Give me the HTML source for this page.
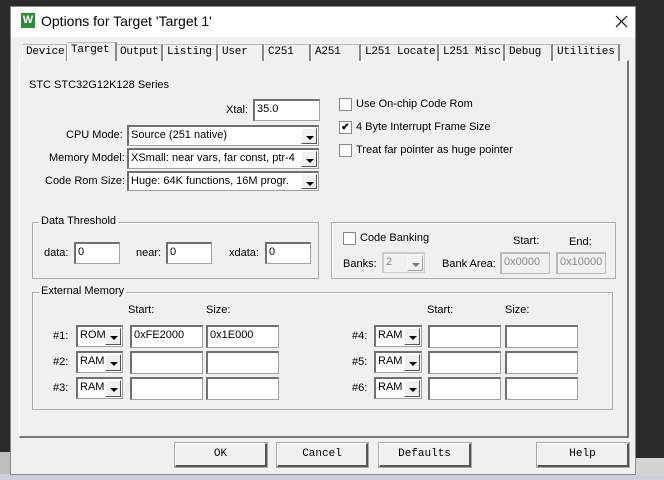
<!DOCTYPE html>
<html><head><meta charset="utf-8"><style>
*{box-sizing:border-box;margin:0;padding:0}
body{width:664px;height:480px;background:#2b2b2b;position:relative;overflow:hidden;font-family:"Liberation Sans",Arial,sans-serif;font-size:11px;color:#000}
.a{position:absolute;white-space:nowrap}
.dlg{position:absolute;left:10px;top:6px;width:626px;height:469px;background:#f0f0f0;border:1px solid #888}
.title{position:absolute;left:0;top:0;width:624px;height:30px;background:#fff}
.tab{position:absolute;top:44px;height:17px;border-top:1px solid #bbb;font-family:"Liberation Mono",monospace;font-size:11px;letter-spacing:-0.2px;line-height:15px;padding-left:3px;background:#f0f0f0;border-left:1px solid #fff;border-right:2px solid #888;white-space:nowrap;overflow:hidden}
.panel{position:absolute;left:19px;top:60px;width:610px;height:378px;border:1px solid #fff;border-right:2px solid #777;border-bottom:2px solid #777}
.box{position:absolute;background:#fff;border:1px solid #a0a0a0;border-top:2px solid #707070;border-left:2px solid #707070;padding-left:2px;line-height:16px;white-space:nowrap;overflow:hidden}
.combo{position:absolute;background:#fff;border:1px solid #a0a0a0;border-top:2px solid #707070;border-left:2px solid #707070;padding-left:2px;line-height:16px;white-space:nowrap;overflow:hidden}
.combo i{position:absolute;right:1px;top:1px;width:16px;bottom:1px;background:#f0f0f0;border:1px solid #fff;border-right:1px solid #555;border-bottom:1px solid #555}
.combo i:after{content:"";position:absolute;left:4px;top:7px;border-left:4px solid transparent;border-right:4px solid transparent;border-top:4px solid #000}
.grp{position:absolute;border:1px solid #aaa;box-shadow:inset 1px 1px 0 #fff}
.leg{position:absolute;background:#f0f0f0;padding:0 2px;top:-8px;left:6px}
.cb{position:absolute;width:13px;height:13px;background:#fff;border:1px solid #888}
.btn{position:absolute;top:443px;height:24px;border:1px solid #fff;border-right:2px solid #555;border-bottom:2px solid #555;outline:1px solid #aaa;font-family:"Liberation Mono",monospace;font-size:11px;text-align:center;line-height:20px;background:#f0f0f0}
.dis{color:#888;background:#f0f0f0}
</style></head><body>
<div class="a" style="left:0;top:452px;width:10px;height:28px;background:#bdbdbd"></div>
<div class="a" style="left:0;top:474px;width:664px;height:6px;background:#c8d0dc"></div>
<div class="a" style="left:636px;top:458px;width:28px;height:18px;background:#d4d4d4"></div>
<div class="dlg">
<div class="title">
<div class="a" style="left:10px;top:6px;width:14px;height:15px;background:#2e8b3a;color:#fff;font-size:11px;font-weight:bold;text-align:center;line-height:15px">W</div>
<div class="a" style="left:30px;top:6px;font-size:14px">Options for Target 'Target 1'</div>
<svg class="a" style="left:604px;top:8px" width="13" height="13"><path d="M1 1L12 12M12 1L1 12" stroke="#000" stroke-width="1.2"/></svg>
</div>
</div>
<div class="panel"></div>
<div class="tab" style="left:22px;width:46px">Device</div>
<div class="tab" style="left:67px;width:50px;top:42px;height:19px;z-index:2">Target</div>
<div class="tab" style="left:116px;width:47px">Output</div>
<div class="tab" style="left:163px;width:55px">Listing</div>
<div class="tab" style="left:218px;width:46px">User</div>
<div class="tab" style="left:264px;width:47px">C251</div>
<div class="tab" style="left:311px;width:50px">A251</div>
<div class="tab" style="left:361px;width:78px">L251 Locate</div>
<div class="tab" style="left:439px;width:66px">L251 Misc</div>
<div class="tab" style="left:505px;width:48px">Debug</div>
<div class="tab" style="left:553px;width:67px">Utilities</div>

<div class="a" style="left:29px;top:79px">STC STC32G12K128 Series</div>
<div class="a" style="left:226px;top:104px">Xtal:</div>
<div class="box" style="left:253px;top:99px;width:67px;height:22px">35.0</div>
<div class="a" style="left:66px;top:129px">CPU Mode:</div>
<div class="combo" style="left:127px;top:125px;width:192px;height:21px">Source (251 native)<i></i></div>
<div class="a" style="left:49px;top:152px">Memory Model:</div>
<div class="combo" style="left:127px;top:148px;width:192px;height:21px">XSmall: near vars, far const, ptr-4<i></i></div>
<div class="a" style="left:45px;top:175px">Code Rom Size:</div>
<div class="combo" style="left:127px;top:171px;width:192px;height:20px">Huge: 64K functions, 16M progr.<i></i></div>

<div class="cb" style="left:339px;top:98px"></div><div class="a" style="left:356px;top:98px">Use On-chip Code Rom</div>
<div class="cb" style="left:339px;top:121px;font-size:10px;line-height:11px;text-align:center;font-weight:bold">✔</div><div class="a" style="left:356px;top:121px">4 Byte Interrupt Frame Size</div>
<div class="cb" style="left:339px;top:144px"></div><div class="a" style="left:356px;top:144px">Treat far pointer as huge pointer</div>

<div class="grp" style="left:32px;top:222px;width:287px;height:57px"><div class="leg">Data Threshold</div></div>
<div class="a" style="left:44px;top:247px">data:</div><div class="box" style="left:74px;top:242px;width:46px;height:22px">0</div>
<div class="a" style="left:136px;top:247px">near:</div><div class="box" style="left:166px;top:242px;width:46px;height:22px">0</div>
<div class="a" style="left:229px;top:247px">xdata:</div><div class="box" style="left:265px;top:242px;width:46px;height:22px">0</div>

<div class="grp" style="left:331px;top:222px;width:285px;height:57px"></div>
<div class="cb" style="left:343px;top:232px"></div><div class="a" style="left:360px;top:232px">Code Banking</div>
<div class="a" style="left:513px;top:235px">Start:</div><div class="a" style="left:569px;top:236px">End:</div>
<div class="a" style="left:343px;top:258px">Banks:</div>
<div class="combo dis" style="left:382px;top:252px;width:43px;height:21px;border-color:#ccc">2<i style="opacity:.5"></i></div>
<div class="a" style="left:442px;top:258px">Bank Area:</div>
<div class="box dis" style="left:500px;top:252px;width:50px;height:22px;border-color:#bbb">0x0000</div>
<div class="box dis" style="left:556px;top:252px;width:50px;height:22px;border-color:#bbb">0x10000</div>

<div class="grp" style="left:32px;top:292px;width:581px;height:118px"><div class="leg">External Memory</div></div>
<div class="a" style="left:128px;top:304px">Start:</div><div class="a" style="left:206px;top:304px">Size:</div>
<div class="a" style="left:427px;top:304px">Start:</div><div class="a" style="left:505px;top:304px">Size:</div>

<div class="a" style="left:53px;top:330px">#1:</div><div class="combo" style="left:76px;top:325px;width:47px;height:22px">ROM<i></i></div>
<div class="box" style="left:130px;top:325px;width:73px;height:23px">0xFE2000</div><div class="box" style="left:206px;top:325px;width:73px;height:23px">0x1E000</div>
<div class="a" style="left:53px;top:356px">#2:</div><div class="combo" style="left:76px;top:351px;width:47px;height:22px">RAM<i></i></div>
<div class="box" style="left:130px;top:351px;width:73px;height:23px"></div><div class="box" style="left:206px;top:351px;width:73px;height:23px"></div>
<div class="a" style="left:53px;top:382px">#3:</div><div class="combo" style="left:76px;top:377px;width:47px;height:22px">RAM<i></i></div>
<div class="box" style="left:130px;top:377px;width:73px;height:23px"></div><div class="box" style="left:206px;top:377px;width:73px;height:23px"></div>

<div class="a" style="left:352px;top:330px">#4:</div><div class="combo" style="left:374px;top:325px;width:48px;height:22px">RAM<i></i></div>
<div class="box" style="left:428px;top:325px;width:73px;height:23px"></div><div class="box" style="left:505px;top:325px;width:73px;height:23px"></div>
<div class="a" style="left:352px;top:356px">#5:</div><div class="combo" style="left:374px;top:351px;width:48px;height:22px">RAM<i></i></div>
<div class="box" style="left:428px;top:351px;width:73px;height:23px"></div><div class="box" style="left:505px;top:351px;width:73px;height:23px"></div>
<div class="a" style="left:352px;top:382px">#6:</div><div class="combo" style="left:374px;top:377px;width:48px;height:22px">RAM<i></i></div>
<div class="box" style="left:428px;top:377px;width:73px;height:23px"></div><div class="box" style="left:505px;top:377px;width:73px;height:23px"></div>

<div class="btn" style="left:175px;width:92px">OK</div>
<div class="btn" style="left:277px;width:91px">Cancel</div>
<div class="btn" style="left:379px;width:92px">Defaults</div>
<div class="btn" style="left:537px;width:92px">Help</div>
</body></html>
